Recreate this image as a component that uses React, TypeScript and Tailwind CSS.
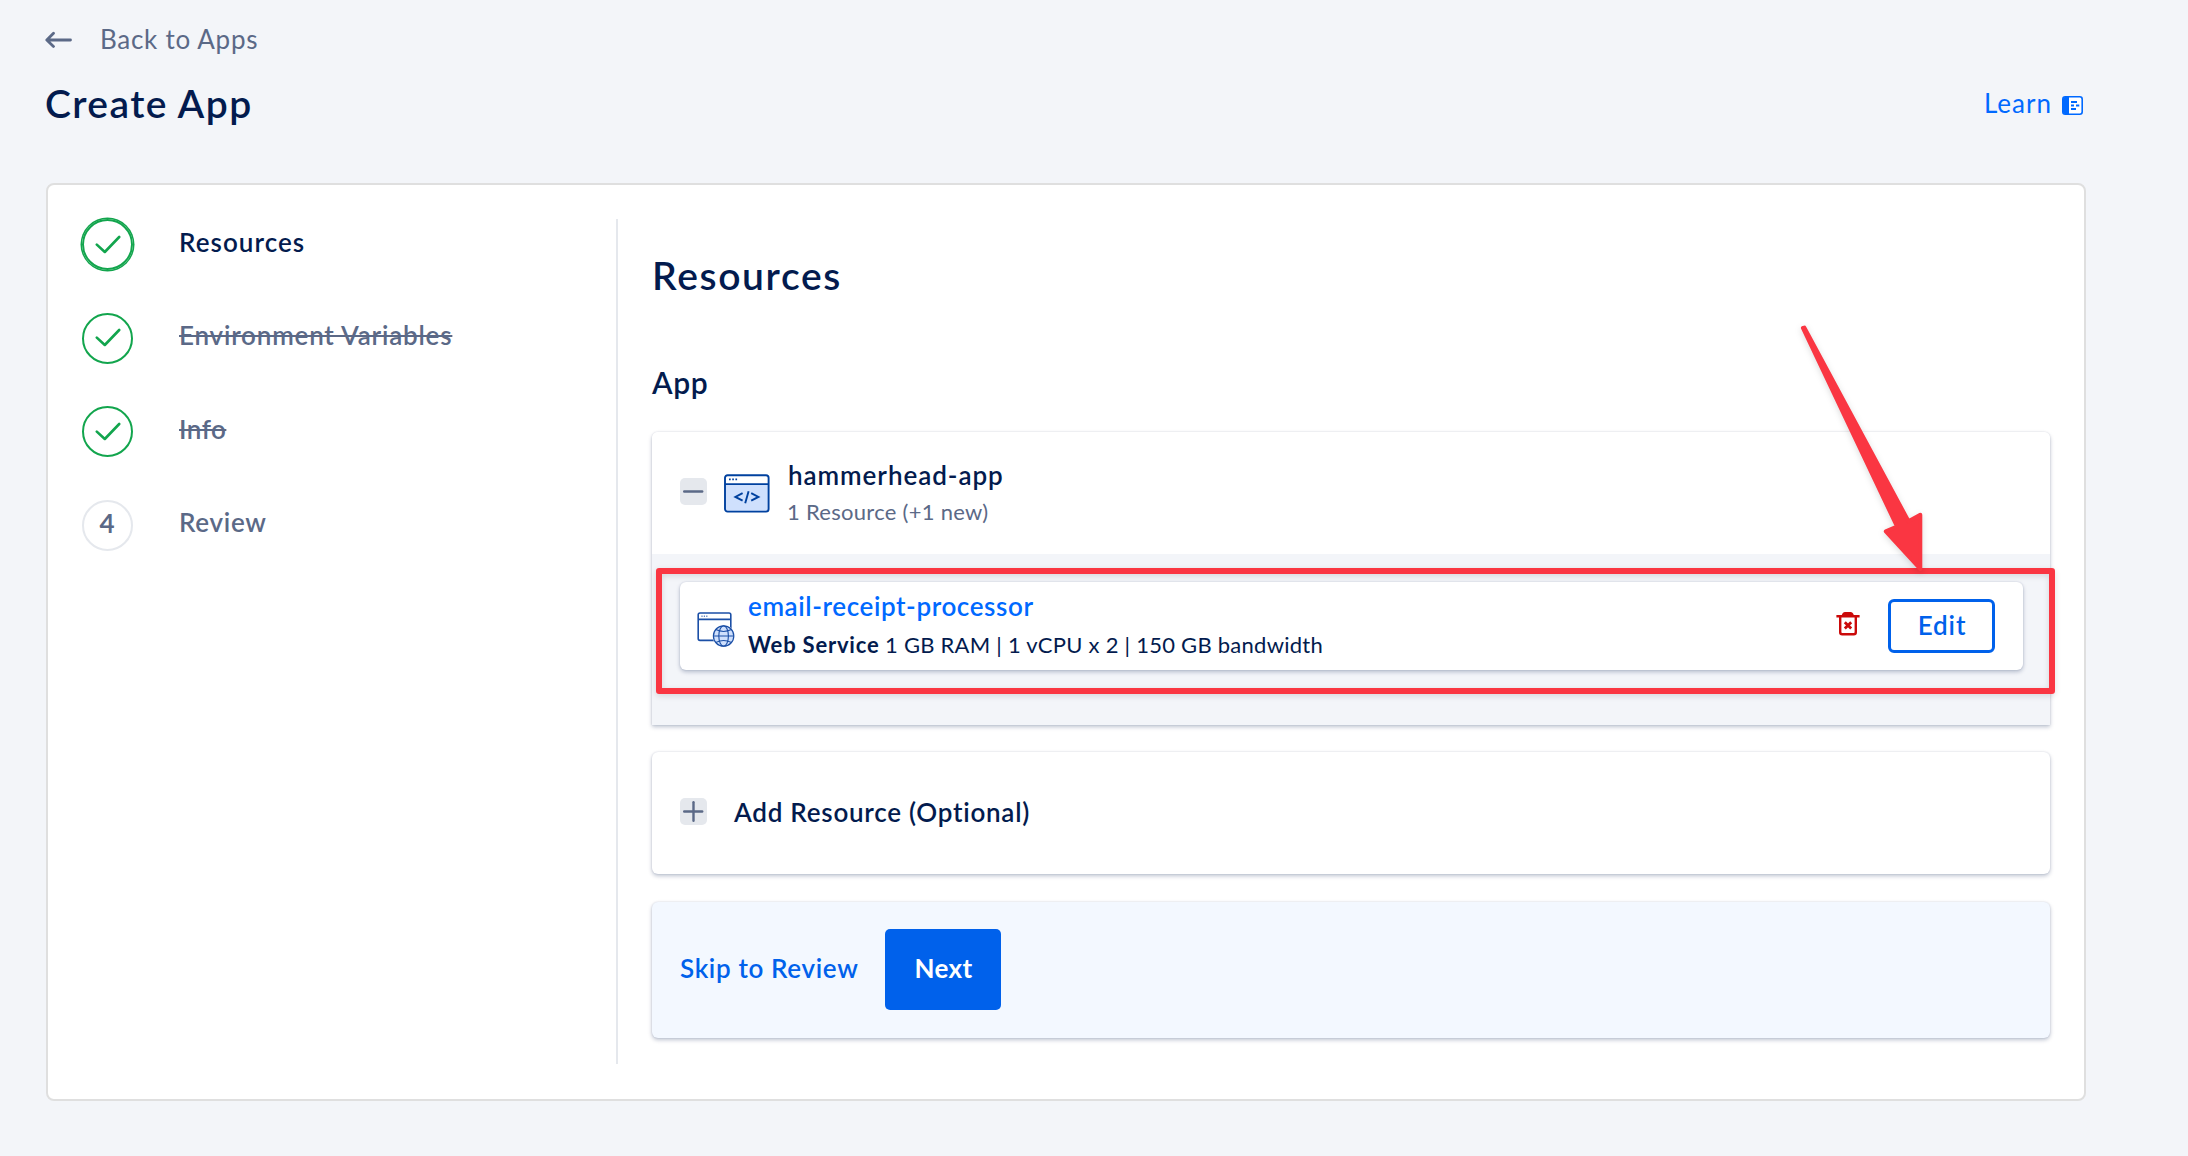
import React from "react";

const cardShadow = "shadow-[0_2px_4px_rgba(3,27,78,0.26),0_0_2px_rgba(3,27,78,0.14)]";

function ArrowLeft() {
  return (
    <svg width="27" height="18" viewBox="0 0 27 18" fill="none" stroke="#5b6987" strokeWidth="2.8" strokeLinecap="round" strokeLinejoin="round">
      <path d="M25.5 9H2M8.5 2.2L1.8 9l6.7 6.4" />
    </svg>
  );
}

function LearnIcon() {
  return (
    <svg width="21" height="19" viewBox="0 0 21 19" fill="none">
      <rect x="0.8" y="0.8" width="19.4" height="17.4" rx="2.4" fill="#fff" stroke="#0069ff" strokeWidth="1.6" />
      <path d="M1 3a2 2 0 0 1 2-2h4v17H3a2 2 0 0 1-2-2z" fill="#0069ff" />
      <path d="M9 6h6M9 9.5h3M14 9.5h3.3M9 13h5" stroke="#0069ff" strokeWidth="1.8" />
    </svg>
  );
}

function Check() {
  return (
    <svg width="26" height="19" viewBox="0 0 26 19" fill="none" stroke="#12a54d" strokeWidth="2.6" strokeLinecap="round" strokeLinejoin="round">
      <path d="M1.8 9.6l8 7.4L24.2 2" />
    </svg>
  );
}

function AppWindowIcon() {
  return (
    <svg width="46" height="39" viewBox="0 0 46 39" fill="none">
      <rect x="1" y="1.2" width="43.6" height="36.4" rx="2.6" fill="#cfe0fd" />
      <path d="M1 10V3.6a2.4 2.4 0 0 1 2.4-2.4h38.8a2.4 2.4 0 0 1 2.4 2.4V10z" fill="#fff" />
      <rect x="1" y="1.2" width="43.6" height="36.4" rx="2.6" stroke="#00419f" strokeWidth="1.9" />
      <path d="M1 10.1h43.6" stroke="#00419f" strokeWidth="1.9" />
      <path d="M5 5.4h1.7M8.2 5.4h1.7M11.4 5.4h1.7" stroke="#00419f" strokeWidth="1.7" />
      <path d="M18.6 19.2l-7.2 3.7 7.2 3.7M27.2 19.2l7.2 3.7-7.2 3.7M24.6 17.2l-3.4 12" stroke="#00419f" strokeWidth="1.9" />
    </svg>
  );
}

function WebServiceIcon() {
  return (
    <svg width="38" height="35" viewBox="0 0 38 35" fill="none" stroke="#1b4fa6">
      <rect x="1.2" y="1" width="32.6" height="27.4" rx="1.8" strokeWidth="1.6" />
      <path d="M1.2 7.4h32.6" strokeWidth="1.6" />
      <path d="M4.4 4.2h1.2M6.8 4.2H8M9.2 4.2h1.2" strokeWidth="1.6" strokeOpacity="0.7" />
      <circle cx="26.6" cy="24" r="11" fill="#fff" stroke="none" />
      <circle cx="26.6" cy="24" r="10.2" fill="#cfe0fd" strokeWidth="1.2" />
      <ellipse cx="26.6" cy="24" rx="4.8" ry="10.2" strokeWidth="1.1" />
      <path d="M16.4 24h20.4M18.8 17.6c4.6 2.2 11 2.2 15.6 0M18.8 30.4c4.6-2.2 11-2.2 15.6 0" strokeWidth="1.1" />
    </svg>
  );
}

function TrashIcon() {
  return (
    <svg width="24" height="24" viewBox="0 0 24 24" fill="none">
      <path d="M0.4 3h5.4C6.4 1 7.6 0 9 0h5.6c1.4 0 2.6 1 3.2 3h5.8v2.6H0.4z" fill="#cb0a0a" />
      <path d="M4.2 4.5v15.8a2 2 0 0 0 2 2h11.6a2 2 0 0 0 2-2V4.5" stroke="#cb0a0a" strokeWidth="2.4" />
      <path d="M8.8 10.2l6.4 6.4M15.2 10.2l-6.4 6.4" stroke="#cb0a0a" strokeWidth="2.8" />
    </svg>
  );
}

function ToggleBox({ plus = false }: { plus?: boolean }) {
  return (
    <div className="flex h-[27px] w-[27px] shrink-0 rounded-[5px] bg-[#e5e8ed]">
      <svg width="27" height="27" viewBox="0 0 27 27" stroke="#5b6987" strokeWidth="2.4" strokeLinecap="round">
        <path d="M4.2 13.5h18" />
        {plus && <path d="M13.5 4.2v18.6" />}
      </svg>
    </div>
  );
}

function Step({ children, label, ring, labelClass }: { children: React.ReactNode; label: string; ring: string; labelClass: string }) {
  return (
    <div className="flex h-[51px] items-center">
      <div className={`flex h-[51px] w-[51px] items-center justify-center rounded-full ${ring}`}>{children}</div>
      <span className={`ml-[46px] pb-[6px] text-[26px] leading-8 font-semibold whitespace-nowrap ${labelClass}`}>{label}</span>
    </div>
  );
}

export default function App() {
  return (
    <div className="relative h-[1156px] w-[2188px] overflow-hidden bg-[#f3f5f9] pt-[23px] pl-[45px] font-[Lato,sans-serif] text-[#031b4e]">
      <a className="flex h-8 items-center text-[26px] leading-8 tracking-[0.72px] text-[#5b6987]">
        <span className="mt-[2px]"><ArrowLeft /></span>
        <span className="ml-[28px]">Back to Apps</span>
      </a>

      <header className="mt-6 flex h-12 w-[2038px] items-center justify-between">
        <h1 className="text-[39px] leading-[48px] font-semibold tracking-[1.4px]">Create App</h1>
        <a className="flex items-center text-[26px] leading-8 tracking-[1px] text-[#0069ff]">
          <span className="mr-[10px]">Learn</span>
          <span className="mt-[5px]"><LearnIcon /></span>
        </a>
      </header>

      <main className="mt-[56px] ml-px flex h-[918px] w-[2040px] rounded-[8px] border-2 border-[#dfdfdf] bg-white pt-[34px] pb-[35px]">
        <nav className="flex w-[570px] shrink-0 flex-col gap-[42.5px] border-r-2 border-[#e5e8ed] pl-[34px]">
          <Step label="Resources" ring="border-2 border-[#12a54d] ring-[1.5px] ring-[#12a54d]" labelClass="tracking-[1.05px]"><Check /></Step>
          <Step label="Environment Variables" ring="border-2 border-[#12a54d]" labelClass="text-[#5b6987] tracking-[0.8px] line-through decoration-2"><span className="-mt-[2px]"><Check /></span></Step>
          <Step label="Info" ring="border-2 border-[#12a54d]" labelClass="text-[#5b6987] tracking-[0.5px] line-through decoration-2"><Check /></Step>
          <Step label="Review" ring="border-2 border-[#e5e8ed]" labelClass="text-[#5b6987] tracking-[0.7px]">
            <span className="pr-px pb-1 text-[26px] leading-8 font-bold text-[#5b6987]">4</span>
          </Step>
        </nav>

        <section className="ml-[34px] w-[1398px] pt-[32px]">
          <h2 className="text-[39px] leading-[48px] font-semibold tracking-[1.65px]">Resources</h2>
          <h3 className="mt-[65px] text-[30px] leading-9 font-semibold tracking-[0.6px]">App</h3>

          <div className={`mt-8 rounded-t-[6px] ${cardShadow}`}>
            <div className="flex h-[122px] items-center rounded-t-[6px] bg-white pb-[3px] pl-7">
              <ToggleBox />
              <span className="mt-[3px] ml-[17px]"><AppWindowIcon /></span>
              <div className="ml-[18px] flex flex-col gap-[7px] pt-[2px]">
                <span className="text-[26px] leading-8 font-semibold tracking-[0.94px]">hammerhead-app</span>
                <span className="-ml-px text-[22px] leading-7 tracking-[0.28px] text-[#5b6987]">1 Resource (+1 new)</span>
              </div>
            </div>
            <div className="h-[171px] bg-[#f3f5f9] p-7 pr-[27px]">
              <div className={`flex h-[88px] items-center rounded-[6px] bg-white pr-7 pl-[17px] ${cardShadow}`}>
                <span className="mt-[6px]"><WebServiceIcon /></span>
                <div className="ml-[13px] flex flex-1 flex-col gap-[8.5px] pb-[3px]">
                  <a className="text-[26px] leading-8 font-semibold tracking-[0.6px] text-[#0069ff]">email-receipt-processor</a>
                  <p className="flex text-[22px] leading-7 whitespace-nowrap">
                    <span className="w-[137px] font-bold tracking-[0.8px]">Web Service</span>
                    <span className="tracking-[0.25px]">1 GB RAM | 1 vCPU x 2 | 150 GB bandwidth</span>
                  </p>
                </div>
                <span className="mr-7 -mt-[4px]"><TrashIcon /></span>
                <button className="h-[54px] w-[107px] rounded-[6px] border-3 border-[#0061eb] pb-[2px] pl-px text-[26px] leading-8 font-semibold tracking-[0.9px] text-[#0061eb]">Edit</button>
              </div>
            </div>
          </div>

          <div className={`mt-[27px] flex h-[122px] items-center rounded-[6px] bg-white pb-[3px] pl-7 ${cardShadow}`}>
            <ToggleBox plus />
            <span className="ml-[27px] text-[26px] leading-8 font-semibold tracking-[0.75px]">Add Resource (Optional)</span>
          </div>

          <div className={`mt-7 flex h-[136px] items-center rounded-[6px] bg-[#f3f8ff] pb-px pl-7 ${cardShadow}`}>
            <a className="w-[205px] pb-[4px] text-[26px] leading-8 font-semibold tracking-[0.65px] whitespace-nowrap text-[#0061eb]">Skip to Review</a>
            <button className="h-[81px] w-[116px] rounded-[5px] bg-[#0061eb] pb-[4px] pl-px text-[26px] leading-8 font-bold tracking-[0.3px] text-white">Next</button>
          </div>
        </section>
      </main>

      <div className="pointer-events-none absolute top-[568px] left-[656px] h-[126px] w-[1399px] rounded-[3px] border-6 border-[#fa3642] shadow-[0_2px_6px_rgba(0,0,0,0.12),inset_0_2px_6px_rgba(0,0,0,0.12)]" />
      <svg className="pointer-events-none absolute top-[320px] left-[1790px] drop-shadow-[0_2px_3px_rgba(0,0,0,0.14)]" width="150" height="260" viewBox="0 0 150 260">
        <path d="M12.9 8L107 206.5L95.8 211.4L130.3 249L130.3 194.7L118.5 201.2L14.4 7.6Z" fill="#fa3642" stroke="#fa3642" strokeWidth="4" strokeLinejoin="round" />
      </svg>
    </div>
  );
}
